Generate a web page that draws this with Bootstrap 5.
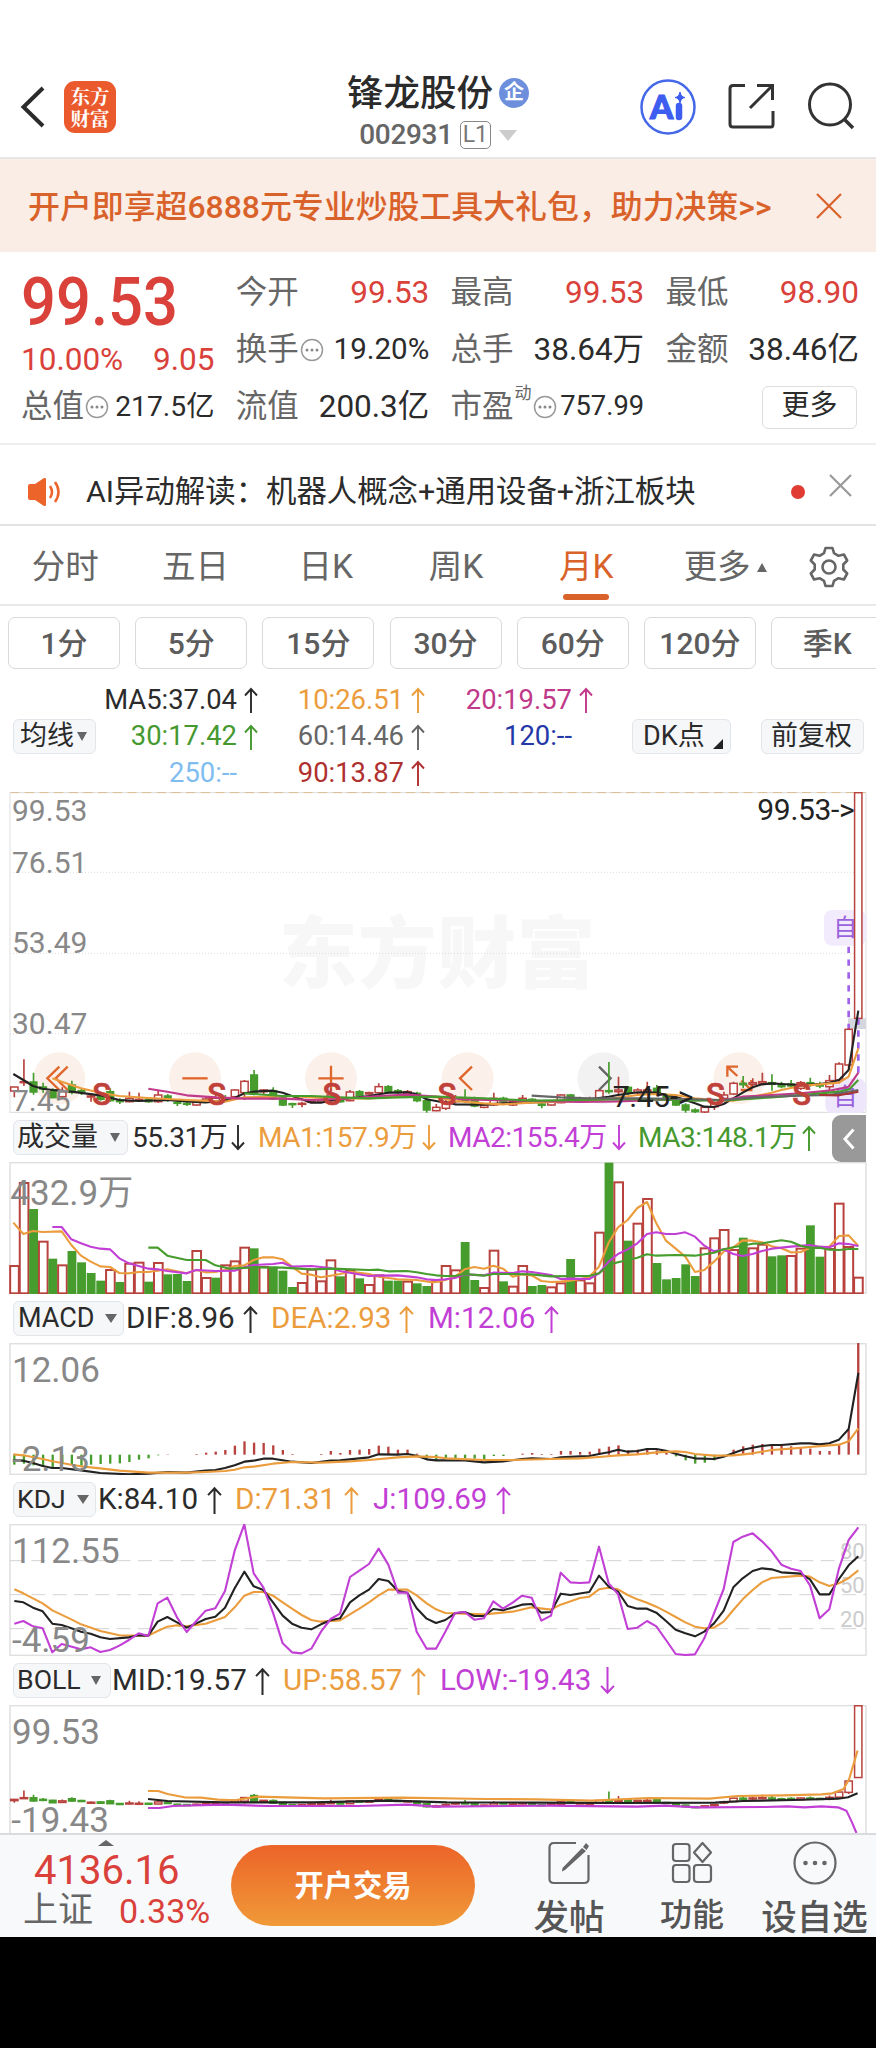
<!DOCTYPE html>
<html lang="zh-CN">
<head>
<meta charset="utf-8">
<meta name="viewport" content="width=device-width, initial-scale=1">
<title>锋龙股份 002931</title>
<link rel="stylesheet" href="https://cdn.jsdelivr.net/npm/bootstrap@5.3.0/dist/css/bootstrap.min.css">
<style>
:root{--up:#d9413a;--ink:#2b2b2b;--mut:#666;--org:#d9622b;--amber:#eb9d3e;--vio:#c23fd6;--grn:#46992f}
body{font-family:Roboto,"Noto Sans CJK SC",sans-serif;color:var(--ink);background:#fff;width:876px;overflow-x:hidden;line-height:1;white-space:nowrap}
svg{display:block;flex:none}
.c-up{color:var(--up)}.c-mut{color:var(--mut)}.c-org{color:var(--org)}.c-amber{color:var(--amber)}.c-vio{color:var(--vio)}.c-grn{color:var(--grn)}
.topbar{height:159px;padding:56px 20px 0 20px;display:grid;grid-template-columns:1fr auto 1fr;border-bottom:2px solid #e6e6e6}
.logo{width:52px;height:52px;border-radius:11px;background:#ea5a2d;color:#fff;font:700 19.5px/22px "Noto Serif CJK SC","Noto Sans CJK SC",sans-serif;text-align:center;padding-top:4px;white-space:normal}
.ttl{font-size:36.5px;font-weight:500;line-height:44px;padding-top:2px}
.qi{width:30px;height:30px;border-radius:50%;background:#6e90dc;color:#fff;font-size:20px;font-weight:700;line-height:28px;text-align:center}
.code{font-size:28px;font-weight:500;color:#666;letter-spacing:-.3px;line-height:30px}
.lv{width:31px;height:28px;border:1.5px solid #888;border-radius:5px;font-size:23px;line-height:25px;text-align:center;color:#777}
.tri-d{width:0;height:0;border:5px solid transparent;border-top:9px solid #666;border-bottom:0}
.tri-u{width:0;height:0;border:6px solid transparent;border-bottom:10px solid #666;border-top:0}
.promo{height:93px;background:#faede5;color:var(--org);font-size:31.9px;font-weight:500;padding:0 34px 0 28px}
.quote{height:193px;padding:12px 0 0 21px;display:grid;grid-template-columns:repeat(4,193.5px);column-gap:21.3px;grid-template-rows:57px 57px 58px;border-bottom:2px solid #eee;font-size:31.5px}
.quote>div{display:flex;justify-content:space-between;align-items:center}
.price{font-size:61.500px;font-weight:500;padding-top:20px;transform:scaleY(1.08)}
.dots{width:24px;height:24px}
.more{width:95px;height:43px;border:1.5px solid #ddd;border-radius:6px;font-size:28px;text-align:center;line-height:38px;margin:0 2px 0 auto}
.notice{height:81px;border-bottom:2px solid #e3e3e3;padding:15px 24px 0 27px;font-size:30.4px}
.reddot{width:14px;height:14px;border-radius:50%;background:#e03c32}
.tabs{height:80px;border-bottom:2px solid #e8e8e8;font-size:33.5px;color:var(--mut)}
.tabs>div{width:130.3px;height:78px;display:flex;align-items:center;justify-content:center;position:relative;padding-top:4px}
.tabs .on{color:var(--org)}
.tabs .on::after{content:"";position:absolute;bottom:4px;width:46px;height:6px;border-radius:3px;background:var(--org)}
.mins{padding:11px 0 0 8px;gap:15.2px;height:64px;width:876px;overflow:hidden}
.mins>div{flex:0 0 112px;height:52px;border:1.5px solid #d9d9d9;border-radius:7px;font-size:30px;font-weight:500;color:#5c5c5c;text-align:center;line-height:52px}
.malegend{height:122px;padding-top:12px}
.magrid{display:grid;grid-template-columns:162px 167px 168px;grid-template-rows:repeat(3,36.6px);font-size:27.4px}
.magrid>div{display:flex;justify-content:flex-end;align-items:center}
.magrid svg,.magrid i{width:14px;margin-left:7px}
.pill{height:35px;background:#f5f7f9;border:1.5px solid #e2e5ea;border-radius:6px;display:flex;align-items:center;font-size:27px;flex:none}
.ind{height:49px;padding-left:13px;display:flex;align-items:center;position:relative;font-size:29.6px}
.ind .it{display:flex;justify-content:space-between;align-items:center;flex:none}
.ind .vt{font-size:28px;letter-spacing:-.5px}
.fold{position:absolute;left:832px;top:2px;width:34px;height:47px;background:#999;border-radius:9px 0 0 9px;display:flex;align-items:center;justify-content:center}
.dock{height:104px;background:#f8f9fb;border-top:2px solid #d9dbde;display:grid;grid-template-columns:231px 244px 36px 116px 130px 115px;position:relative;color:#555}
.cta{height:81px;margin-top:10px;border-radius:41px;background:linear-gradient(#ec6429,#f09a38);color:#fff;font-size:29.3px;font-weight:700;text-align:center;line-height:82px}
.dk{display:flex;flex-direction:column;align-items:center;padding-top:6px;font-weight:500}
.dk span{line-height:44px;margin-top:11px;font-size:35.5px}
.foot{height:111px;background:#000}
</style>
</head>
<body>
<svg width="0" height="0" style="position:absolute"><defs>
<symbol id="up" viewBox="0 0 14 26"><path d="M7 26V2M1 8.500L7 2l6 6.500" fill="none" stroke="currentColor" stroke-width="1.900"/></symbol>
<symbol id="dn" viewBox="0 0 14 26"><path d="M7 0v24M1 17.500L7 24l6-6.500" fill="none" stroke="currentColor" stroke-width="1.900"/></symbol>
<symbol id="dots" viewBox="0 0 24 24"><circle cx="12" cy="12" r="10.500" fill="none" stroke="#999" stroke-width="1.500"/><g fill="#888"><circle cx="7" cy="12" r="1.500"/><circle cx="12" cy="12" r="1.500"/><circle cx="17" cy="12" r="1.500"/></g></symbol>
</defs></svg>

<header class="topbar">
  <div class="d-flex align-items-center">
    <svg width="26" height="42" viewBox="0 0 26 42"><path d="M23 2L3.500 21 23 40" fill="none" stroke="#2b2b2b" stroke-width="4"/></svg>
    <div class="logo" style="margin-left:18px">东方<br>财富</div>
  </div>
  <div class="d-flex flex-column align-items-center" style="padding-top:14px">
    <div class="d-flex align-items-center"><span class="ttl">锋龙股份</span><span class="qi" style="margin-left:6px">企</span></div>
    <div class="d-flex align-items-center mt-1"><span class="code">002931</span><span class="lv" style="margin:0 8px 0 7px">L1</span><span class="tri-d" style="border-width:11px 9px 0;border-top-color:#ccc"></span></div>
  </div>
  <div class="d-flex align-items-center justify-content-end">
    <svg width="56" height="56" viewBox="0 0 56 56"><circle cx="28" cy="28" r="26.500" fill="#fff" stroke="#4468e8" stroke-width="2.500"/><text x="10" y="39.500" font-family="Lato" font-weight="900" font-size="33" fill="#3d5cf0" stroke="#3d5cf0" stroke-width="1.200" textLength="21">A</text><path d="M39 27v11" stroke="#3d5cf0" stroke-width="6.500" stroke-linecap="round"/><path d="M40 13q1 5 5 5.500-4 .500-5 5.500-1-5-5-5.500 4-.500 5-5.500z" fill="#3d5cf0" stroke="#3d5cf0"/></svg>
    <svg style="margin-left:32px" width="47" height="47" viewBox="0 0 47 47"><path d="M17 2.500H5q-3 0-3 3V41q0 3 3 3h38q2 0 2-3V28M29 2.500h15.500V17M44 3L22 25" fill="none" stroke="#333" stroke-width="3"/></svg>
    <svg style="margin-left:32px" width="49" height="49" viewBox="0 0 49 49"><circle cx="23" cy="22.500" r="20.500" fill="none" stroke="#333" stroke-width="3"/><path d="M37 37l9 9" stroke="#333" stroke-width="3.500"/></svg>
  </div>
</header>

<div class="promo d-flex align-items-center justify-content-between"><span style="padding-top:4px">开户即享超6888元专业炒股工具大礼包，助力决策&gt;&gt;</span>
<svg width="26" height="26" viewBox="0 0 26 26"><path d="M1 1l24 24M25 1L1 25" stroke="#d9622b" stroke-width="2.200"/></svg></div>

<section class="quote">
  <div><span class="price c-up">99.53</span></div>
  <div><span class="c-mut">今开</span><span class="c-up">99.53</span></div>
  <div><span class="c-mut">最高</span><span class="c-up">99.53</span></div>
  <div><span class="c-mut">最低</span><span class="c-up">98.90</span></div>
  <div class="c-up" style="padding-top:20px"><span>10.00%</span><span>9.05</span></div>
  <div><span class="c-mut">换手</span><svg class="dots" style="margin:0 auto 0 1px"><use href="#dots"/></svg><span style="font-size:29.5px">19.20%</span></div>
  <div><span class="c-mut">总手</span><span>38.64万</span></div>
  <div><span class="c-mut">金额</span><span>38.46亿</span></div>
  <div><span class="c-mut">总值</span><svg class="dots" style="margin:0 auto 0 1px"><use href="#dots"/></svg><span style="font-size:28.3px">217.5亿</span></div>
  <div><span class="c-mut">流值</span><span>200.3亿</span></div>
  <div><span class="c-mut">市盈</span><sup class="c-mut" style="font-size:17px;top:-14px;margin-left:1px">动</sup><svg class="dots" style="margin:0 auto 0 1px"><use href="#dots"/></svg><span style="font-size:27.3px">757.99</span></div>
  <div><span class="more">更多</span></div>
</section>

<div class="notice d-flex align-items-center">
  <svg width="34" height="28" viewBox="0 0 34 28"><path d="M1 8q0-2 2-2h5l9-6q2-1 2 2v24q0 3-2 2l-9-6H3q-2 0-2-2z" fill="#ec6429"/><path d="M23 8q4 6 0 12M28 4q7 10 0 20" fill="none" stroke="#ec6429" stroke-width="2.500"/></svg>
  <span style="margin-left:25px">AI异动解读：机器人概念+通用设备+浙江板块</span>
  <span class="reddot ms-auto"></span>
  <svg style="margin:-14px 0 0 24px" width="23" height="23" viewBox="0 0 23 23"><path d="M1 1l21 21M22 1L1 22" stroke="#999" stroke-width="2.200"/></svg>
</div>

<nav class="tabs d-flex">
  <div>分时</div><div>五日</div><div>日K</div><div>周K</div><div class="on">月K</div>
  <div style="padding-left:17px">更多<span class="tri-u" style="margin-left:6px;border-width:0 5.500px 9px"></span></div>
  <div style="width:94px"><svg width="42" height="42" viewBox="0 0 42 42"><path d="M17.500 2h7l1.500 5.200 4.500 2.600 5.400-1.300 3.300 6-3.900 4v5l3.900 4-3.300 6-5.400-1.300-4.500 2.600L24.500 40h-7L16 34.800l-4.500-2.600-5.400 1.300-3.300-6 3.900-4v-5l-3.900-4 3.300-6 5.400 1.300L16 7.200z" fill="none" stroke="#666" stroke-width="2.600" stroke-linejoin="round"/><circle cx="21" cy="21" r="6.500" fill="none" stroke="#666" stroke-width="2.600"/></svg></div>
</nav>

<div class="mins d-flex"><div>1分</div><div>5分</div><div>15分</div><div>30分</div><div>60分</div><div>120分</div><div>季K</div></div>

<div class="malegend d-flex">
  <div class="pill" style="margin:37px 0 0 13px;width:83px;padding-left:6px">均线<span class="tri-d" style="margin-left:3px"></span></div>
  <div class="magrid">
    <div>MA5:37.04<svg height="26"><use href="#up"/></svg></div>
    <div class="c-amber">10:26.51<svg height="26"><use href="#up"/></svg></div>
    <div style="color:#c0398a">20:19.57<svg height="26"><use href="#up"/></svg></div>
    <div class="c-grn">30:17.42<svg height="26"><use href="#up"/></svg></div>
    <div class="c-mut">60:14.46<svg height="26"><use href="#up"/></svg></div>
    <div style="color:#2438a8">120:--<i></i></div>
    <div style="color:#7fbdf0">250:--<i></i></div>
    <div style="color:#b03030">90:13.87<svg height="26"><use href="#up"/></svg></div>
  </div>
  <div class="pill" style="margin:37px 0 0 39px;width:99px;padding-left:10px">DK点<svg style="margin:14px 0 0 8px" width="10" height="10"><path d="M10 0v10H0z" fill="#222"/></svg></div>
  <div class="pill" style="margin:37px 0 0 30px;width:103px;padding-left:9px">前复权</div>
</div>

<svg id="kline" width="876" height="321" viewBox="0 36 2628 963"></svg>

<div class="ind">
  <div class="pill" style="width:115px;padding-left:3px">成交量<span class="tri-d" style="margin-left:12px;border-width:9px 5.500px 0"></span></div>
  <div class="it vt" style="width:113px;margin-left:4px">55.31万<svg width="14" height="28"><use href="#dn"/></svg></div>
  <div class="it vt c-amber" style="width:178px;margin-left:13px">MA1:157.9万<svg width="14" height="28"><use href="#dn"/></svg></div>
  <div class="it vt c-vio" style="width:178px;margin-left:12px">MA2:155.4万<svg width="14" height="28"><use href="#dn"/></svg></div>
  <div class="it vt c-grn" style="width:178px;margin-left:12px">MA3:148.1万<svg width="14" height="28"><use href="#up"/></svg></div>
  <div class="fold"><svg width="12" height="22" viewBox="0 0 12 22"><path d="M10.500 1.500L2 11l8.500 9.500" fill="none" stroke="#fff" stroke-width="3"/></svg></div>
</div>
<svg id="vol" width="876" height="132" viewBox="0 156 2628 396"></svg>

<div class="ind">
  <div class="pill" style="width:111px;padding-left:4px;font-size:27px">MACD<span class="tri-d" style="margin-left:10px;border-width:9px 6px 0"></span></div>
  <div class="it" style="width:132px;margin-left:2px">DIF:8.96<svg width="15" height="28"><use href="#up"/></svg></div>
  <div class="it c-amber" style="width:143px;margin-left:13px">DEA:2.93<svg width="15" height="28"><use href="#up"/></svg></div>
  <div class="it c-vio" style="width:131px;margin-left:14px">M:12.06<svg width="15" height="28"><use href="#up"/></svg></div>
</div>
<svg id="macd" width="876" height="132" viewBox="0 40 2628 396"></svg>

<div class="ind">
  <div class="pill" style="width:83px;padding-left:3px;font-size:26.500px">KDJ<span class="tri-d" style="margin-left:11px;border-width:9px 6px 0"></span></div>
  <div class="it" style="width:124px;margin-left:2px">K:84.10<svg width="15" height="28"><use href="#up"/></svg></div>
  <div class="it c-amber" style="width:124px;margin-left:13px">D:71.31<svg width="15" height="28"><use href="#up"/></svg></div>
  <div class="it c-vio" style="width:138px;margin-left:14px">J:109.69<svg width="15" height="28"><use href="#up"/></svg></div>
</div>
<svg id="kdj" width="876" height="132" viewBox="0 582 2628 396"></svg>

<div class="ind">
  <div class="pill" style="width:98px;padding-left:3px;font-size:26.700px">BOLL<span class="tri-d" style="margin-left:10px;border-width:9px 5.500px 0"></span></div>
  <div class="it" style="width:158px;margin-left:1px">MID:19.57<svg width="15" height="28"><use href="#up"/></svg></div>
  <div class="it c-amber" style="width:143px;margin-left:13px">UP:58.57<svg width="15" height="28"><use href="#up"/></svg></div>
  <div class="it c-vio" style="width:175px;margin-left:14px">LOW:-19.43<svg width="15" height="28"><use href="#dn"/></svg></div>
</div>
<svg id="boll" width="876" height="128" viewBox="0 163 2628 384"></svg>

<footer class="dock">
  <div class="c-up" style="padding-top:5px">
    <div class="tri-u" style="margin-left:98px;border-width:0 8px 6px"></div>
    <div style="font-size:40px;line-height:42px;padding-left:34px;margin-top:4px">4136.16</div>
    <div class="d-flex align-items-center" style="font-size:34px;line-height:34px;padding:2px 0 0 23px"><span class="c-mut" style="font-size:35px">上证</span><span style="margin-left:26px">0.33%</span></div>
  </div>
  <div class="cta">开户交易</div>
  <div></div>
  <div class="dk"><svg width="42" height="44" viewBox="0 0 42 44"><path d="M28 2H6Q1.500 2 1.500 6.500V38Q1.500 42 6 42h30q4.500 0 4.500-4V14" fill="none" stroke="#666" stroke-width="2.200"/><path d="M38 2l3 3-2.500 4-3.500-3zM34 7l4 3-21 19-3 1.500.500-3.500z" fill="#666"/></svg><span>发帖</span></div>
  <div class="dk"><svg width="42" height="44" viewBox="0 0 42 44"><g fill="none" stroke="#666" stroke-width="2.200"><rect x="2" y="3" width="16.500" height="17" rx="3"/><rect x="2" y="24" width="16.500" height="17" rx="3"/><rect x="23" y="24" width="17" height="17" rx="3"/><path d="M31.500 2l8.500 9.500-8.500 9.500-8.500-9.500z" stroke-linejoin="round"/></g></svg><span style="font-size:32px;margin-top:8px">功能</span></div>
  <div class="dk"><svg width="44" height="44" viewBox="0 0 44 44"><circle cx="22" cy="22" r="20.500" fill="none" stroke="#666" stroke-width="2.200"/><g fill="#666"><circle cx="12.500" cy="22" r="2.300"/><circle cx="22" cy="22" r="2.300"/><circle cx="31.500" cy="22" r="2.300"/></g></svg><span>设自选</span></div>
</footer>
<div class="foot"></div>

<script>
// All chart drawings use units of one third of a pixel.
const RED='#b8423d', GRN='#469c2d', BLK='#222', ORG='#eb9c3c', VIO='#c23fd6', GRY='#888';
const H=1308, X=i=>43+28.77*i;
const $=id=>document.getElementById(id);
// "x,y ..." from the left half plus points from the right half, shifted by H
function pts(l,r,k=1){const p=(s,o)=>s.trim()?s.trim().split(/\s+/).map(v=>{const a=v.split(',');return (+a[0]*k+o)+','+a[1]}):[];return p(l,0).concat(p(r||'',H)).join(' ')}
const line=(c,l,r,k)=>`<polyline points="${pts(l,r,k)}" fill="none" stroke="${c}" stroke-width="6.3" stroke-linejoin="round"/>`;
const hl=(y,d,c='#ddd',w=3)=>`<path d="M30 ${y}H2598" stroke="${c}" stroke-width="${w}" ${d?`stroke-dasharray="${d}"`:''}/>`;
const txt=(x,y,s,t,c=GRY,e='')=>`<text x="${x}" y="${y}" font-size="${s*3}" fill="${c}" ${e}>${t}</text>`;
const frame=(t,b)=>`<rect x="30" y="${t+2}" width="2568" height="${b-t-4}" fill="none" stroke="#e0e0e0" stroke-width="4.500"/>`;

// colour, high, body top, body bottom, low
const K=`r 920 921 933 952|r 838 905 908 918|g 878 906 936 944|g 908 921 927 938|g 925 930 953 955|r 922 935 950 955|g 902 915 937 943|g 925 932 935 945|r 940 948 950 965|g 940 945 958 962|g 925 935 962 965|g 955 960 965 972|r 935 955 965 967|r 938 958 962 965|g 955 958 965 968|r 930 945 965 968|g 942 948 960 965|g 962 967 969 978|g 965 970 972 978|r 960 967 975 977|r 952 957 965 967|r 940 955 965 970|g 945 955 960 965|r 928 930 950 955|r 900 904 938 960|g 870 885 942 946|r 928 930 935 945|g 922 932 957 960|g 945 950 975 978|g 968 971 974 984|r 965 970 973 982|r 960 964 967 970|r 950 960 966 968|r 925 945 962 965|g 950 955 965 968|r 930 936 962 964|g 930 935 947 950|r 935 938 942 946|r 910 920 938 940|g 915 920 938 940|g 927 932 938 945|r 930 935 942 945|g 935 940 962 967|g 955 962 990 998|r 972 982 992 994|r 960 970 985 990|r 945 955 965 970|g 928 955 962 968|g 950 958 978 982|r 970 975 982 985|r 938 955 975 978|g 950 955 965 968|r 960 965 975 978|r 945 955 963 970|g 955 958 962 966|g 965 972 976 985|r 960 965 975 977|r 943 945 968 970|g 942 945 955 960|r 950 955 962 965|r 950 957 963 966|r 928 932 955 958|g 846 932 935 941|r 890 930 935 945|g 918 922 940 945|r 925 930 938 942|r 905 930 935 938|g 915 925 940 945|g 945 950 955 960|g 950 958 975 978|g 970 975 990 998|g 985 990 995 1002|r 978 982 996 1000|r 965 970 980 990|r 935 945 955 965|r 905 910 942 945|g 888 910 914 924|r 895 908 913 925|r 878 905 910 915|g 883 908 913 932|g 905 915 920 925|g 900 912 918 925|r 903 908 925 930|g 893 908 912 920|g 905 912 918 925|r 885 902 920 930|r 847 852 900 910|r 745 748 855 870|r 38 38 715 715`.split('|').map(s=>s.split(' '));
function candles(f){return K.map(([c,...v],i)=>{const [h,t,b,l]=v.map(n=>f(+n)),x=X(i),col=c=='r'?RED:GRN;
  return `<path d="M${x} ${h}V${t}M${x} ${b}V${l}" stroke="${col}" stroke-width="5"/><rect x="${x-(c=='r'?11:10)}" y="${t}" width="${c=='r'?22:20}" height="${Math.max(b-t,3)}" fill="${c=='r'?'#fff':col}" stroke="${col}" stroke-width="4.5"/>`}).join('')}

const disc=(x,c,p,s)=>`<circle cx="${x}" cy="895" r="78" fill="${c}"/><path d="${p}" fill="none" stroke="${s}" stroke-width="7"/>`;
const PK='#fbf1ea', OR='#e0662c';
$('kline').innerHTML=
 `<text x="836" y="606" font-size="236" font-weight="900" fill="#f7f7f7" textLength="950">东方财富</text>`+
 hl(37,'','#e2e2e2',6)+hl(37,'28 16','#dcb98a',3)+hl(277,'3 6')+hl(520,'3 6')+hl(761,'3 6')+hl(997,'','#e0e0e0',4)+
 `<path d="M30 37V1000M2598 37V1000" stroke="#e8e8e8" stroke-width="4"/>`+
 disc(178,PK,'M178 860L142 895L178 930M203 860L167 895L203 930',OR)+disc(585,PK,'M547 895H623',OR)+disc(993,PK,'M955 895H1031M993 857V933',OR)+
 disc(1403,PK,'M1416 860L1380 895L1416 930',OR)+disc(1810,'#f2f2f2','M1797 860L1832 895L1797 930','#666')+disc(2218,PK,'M2182 890V860H2214M2184 862L2212 888M2222 930H2254V900M2252 928L2224 902',OR)+
 `<rect x="2472" y="390" width="126" height="107" rx="24" fill="#f2ebfd"/><rect x="2476" y="895" width="122" height="106" rx="24" fill="#eee6fb"/><rect x="2544" y="715" width="54" height="32" fill="#d5d7de"/>`+
 `<path d="M2546 500V748" stroke="#a062e8" stroke-width="8" stroke-dasharray="19 19.500"/>`+
 txt(2500,469,24,'自','#9a62dd')+txt(2500,974,24,'自','#9a62dd')+
 candles(y=>y)+
 `<path d="M2575 715V895" stroke="#a062e8" stroke-width="8" stroke-dasharray="19 17"/>`+
 line(BLK,'40,882 70,900 99,918 128,926 157,930 214,935 301,946 358,960 416,963 502,960 560,964 617,967 690,960 733,940 761,935 819,932 848,938 876,948 905,958 934,968 963,968 1000,960 1049,955 1107,948 1165,938 1222,937 1250,943 1280,958 1320,965','28,966 57,973 144,974 201,970 258,968 345,965 403,960 460,958 518,950 546,945 604,937 661,938 719,950 777,970 805,980 834,981 863,972 892,955 920,938 950,922 978,913 1007,910 1036,912 1094,915 1151,912 1180,908 1209,900 1238,870 1267,692')+
 line(ORG,'157,895 185,905 243,925 301,938 358,948 445,954 560,960 675,965 733,952 819,950 876,948 934,952 1020,955 1107,955 1193,950 1250,948 1308,952','57,963 144,970 201,973 287,968 403,964 489,960 546,953 604,945 661,942 719,945 777,955 834,960 892,962 950,950 1007,938 1036,930 1094,918 1151,913 1209,908 1238,890 1267,805')+
 line('#c0398a','445,926 502,935 560,946 646,952 733,956 848,956 934,960 1020,957 1136,948 1222,944 1308,950','86,958 258,962 432,966 546,964 661,960 777,960 863,960 920,950 1007,945 1094,940 1180,932 1238,920 1267,878')+
 line(GRN,'733,940 848,948 934,948 1020,952 1107,955 1193,952 1308,950','144,955 287,962 432,960 604,957 777,962 892,960 1007,952 1122,943 1209,935 1240,928 1267,900')+
 line('#666','','287,947 374,952 460,955 604,955 748,957 863,960 950,952 1065,948 1180,945 1267,930')+
 line('#a83232','','1150,945 1209,946 1267,935')+
 [305,650,996,1341,2146,2405].map(x=>txt(x,974,31,'S','#c0413a','text-anchor="middle" font-weight="500" stroke="#c0413a" stroke-width="2"')).join('')+
 txt(36,124,30,'99.53')+txt(36,278,30,'76.51')+txt(36,520,30,'53.49')+txt(36,761,30,'30.47')+txt(36,993,30,'7.45')+
 txt(2272,120,30,'99.53-&gt;',BLK,'textLength="292"')+txt(1838,982,30,'7.45-&gt;',BLK,'textLength="242"');

const V='r467 r218 g297 r394 g446 r465 g423 g457 g489 g512 r479 g516 r460 r457 g515 r458 g493 g492 g513 r422 r503 g503 r465 r453 r412 g415 r470 g470 g482 g531 r518 r478 r513 r450 g499 r482 g505 r524 r495 g512 g512 r514 g520 g528 r513 r467 r480 g396 g510 r533 r421 g514 r529 r467 g528 g525 r531 r519 g447 r510 r519 r367 g158 r216 g392 r340 r266 g459 g508 g504 g463 g498 r414 r384 r359 r419 g383 r414 r403 g439 g436 r437 r415 g346 g440 r416 r280 r410 r502'.split(' ');
$('vol').innerHTML=frame(156,552)+
 V.map((s,i)=>{const t=+s.slice(1),x=X(i);return s[0]=='r'?`<rect x="${x-12.5}" y="${t+1}" width="26" height="${549-t}" fill="#fff" stroke="${RED}" stroke-width="6"/>`:`<rect x="${x-13}" y="${t}" width="26.5" height="${552-t}" fill="${GRN}"/>`}).join('')+
 line(ORG,'40,338 70,372 99,363 128,366 185,364 214,405 243,437 272,455 301,469 330,471 358,489 387,490 416,486 445,486 473,482 502,478 560,490 589,480 617,487 646,486 675,480 704,468 733,466 761,450 790,442 819,442 848,448 876,470 905,491 934,494 963,502 992,497 1020,492 1049,485 1107,492 1136,500 1193,508 1250,510 1296,517','0,516 28,510 57,500 86,478 115,471 144,476 172,467 201,476 230,500 258,493 287,496 316,513 345,516 374,515 403,512 432,508 460,500 489,470 518,398 546,352 575,330 604,294 633,276 661,340 690,392 748,440 777,486 805,480 834,455 863,425 892,412 920,391 950,392 978,397 1007,409 1036,415 1065,427 1094,426 1122,414 1151,413 1180,410 1209,378 1238,376 1267,408')+
 line(VIO,'157,351 185,351 214,388 243,400 272,410 301,416 330,418 358,445 387,460 416,468 445,476 473,478 502,483 560,490 589,480 646,483 704,482 733,472 761,465 819,462 848,458 876,470 934,468 992,474 1020,483 1049,488 1107,498 1136,497 1193,496 1250,502 1280,508 1308,510','28,508 57,504 86,493 144,496 172,488 230,489 258,484 287,486 345,495 374,507 403,506 460,507 489,490 518,455 546,432 575,418 604,400 633,372 661,367 690,372 719,372 748,367 777,380 805,407 834,424 863,418 892,432 920,438 950,432 978,423 1007,416 1065,410 1122,405 1151,410 1180,412 1209,400 1238,402 1267,408')+
 line(GRN,'445,413 473,413 502,437 560,450 617,450 646,466 690,476 761,472 848,473 934,478 1000,476 1107,480 1136,479 1165,484 1220,483 1250,487 1280,492 1308,496','28,498 57,498 86,492 144,497 172,492 230,492 287,493 345,499 403,498 460,498 489,490 518,465 546,457 575,450 604,443 633,433 661,437 719,435 777,437 805,433 834,428 863,418 892,412 950,401 978,400 1036,391 1065,395 1094,407 1122,414 1151,413 1180,419 1209,420 1238,417 1267,417')+
 txt(31,286,35,'432.9万');

// MACD columns: end of each column, measured from the zero line at 375
const M=[405,402,407,410,417,400,405,408,405,403,402,401,397,390,386,377,374,0,0,373,369,366,361,348,335,339,340,347,361,373,0,0,373,364,370,361,360,358,348,351,360,360,372,388,391,388,385,385,387,388,379,379,0,372,370,373,373,364,364,367,366,357,351,347,362,360,355,362,368,380,392,402,399,392,380,360,350,345,343,348,346,350,352,357,364,364,345,300,40];
$('macd').innerHTML=frame(40,436)+
 M.map((v,i)=>v?`<path d="M${X(i)} 375V${v}" stroke="${v>375?GRN:RED}" stroke-width="7"/>`:'').join('')+
 line(BLK,'40,392 70,393 99,400 128,409 157,415 185,415 243,422 301,430 387,434 445,432 503,427 560,429 617,423 646,421 675,415 704,407 733,396 761,393 790,387 819,387 876,396 934,400 992,393 1020,392 1078,386 1107,383 1136,374 1193,375 1222,373 1250,378 1280,389 1308,392','28,392 86,392 144,398 201,395 258,388 287,386 345,388 374,383 432,380 460,379 489,373 518,368 546,360 575,366 604,364 633,358 661,358 690,363 719,372 748,380 777,386 834,388 863,381 892,370 920,360 950,354 978,349 1007,346 1036,346 1094,341 1122,341 1151,344 1180,341 1209,330 1238,298 1267,130')+
 line(ORG,'40,374 70,377 128,388 157,395 214,405 243,410 301,416 358,423 445,429 560,429 617,427 675,424 704,420 733,413 761,411 819,402 876,397 963,399 1049,395 1107,391 1193,383 1250,380 1308,382','28,386 144,391 230,391 345,388 432,386 489,382 546,377 604,374 661,368 719,365 748,367 777,373 834,378 892,377 950,371 1007,361 1065,357 1122,352 1180,347 1209,345 1238,335 1267,296')+
 txt(36,156,35,'12.06')+txt(36,425,35,'-2.13');

$('kdj').innerHTML=frame(582,978)+hl(692,'42 22','#d4d4d4')+hl(794,'42 22','#d4d4d4')+hl(896,'42 22','#d4d4d4')+
 txt(2520,688,22,'80','#ccc')+txt(2520,790,22,'50','#ccc')+txt(2520,892,22,'20','#ccc')+
 line(ORG,'43,778 70,790 128,820 157,841 214,868 243,883 301,903 358,916 445,917 473,903 502,890 531,886 560,889 617,881 675,861 704,832 733,797 761,786 790,786 819,797 848,817 876,836 905,855 934,870 963,875 1020,871 1078,836 1107,817 1136,796 1165,779 1222,779 1250,796 1280,820 1308,838','28,849 144,853 230,845 287,832 345,839 374,824 432,804 460,800 489,778 518,773 546,778 575,795 604,808 633,818 661,830 690,845 719,861 748,877 777,890 805,895 834,893 863,875 892,840 920,808 950,780 978,757 1007,744 1094,737 1122,740 1151,757 1180,768 1209,760 1238,744 1267,721')+
 line(BLK,'43,813 70,817 99,833 128,844 157,881 185,885 214,895 243,905 272,911 301,922 330,927 387,922 416,916 445,917 473,875 502,861 531,877 560,893 589,880 617,867 646,860 675,833 704,775 733,725 761,769 790,780 819,817 848,857 876,881 905,893 934,898 963,883 992,871 1020,865 1050,817 1078,796 1107,779 1136,747 1165,753 1194,783 1222,788 1250,835 1280,866 1308,879','28,870 57,850 86,846 115,858 144,858 172,837 201,841 258,824 287,822 316,848 345,846 374,791 403,795 460,786 489,737 518,770 546,785 575,828 604,836 633,836 661,848 690,873 719,899 748,910 777,919 805,905 834,880 863,842 892,772 920,745 950,723 978,715 1007,718 1036,727 1094,731 1122,748 1151,793 1180,793 1209,747 1238,706 1267,679')+
 line(VIO,'43,881 70,873 99,889 128,895 157,967 185,942 243,958 272,952 301,966 330,960 358,947 387,930 416,910 445,918 473,820 502,803 531,862 560,906 589,873 617,842 646,835 675,783 704,662 733,583 761,730 790,772 819,848 848,940 876,967 905,970 934,956 963,905 992,867 1020,851 1050,741 1078,722 1107,702 1136,656 1165,704 1194,788 1222,788 1250,905 1280,956 1308,956','28,905 57,849 86,846 115,869 144,865 172,814 201,836 230,818 258,797 287,803 316,872 345,857 374,728 403,757 432,759 460,757 489,650 518,760 546,792 575,897 604,893 633,873 661,889 690,930 719,972 748,975 777,973 805,925 834,850 863,777 892,636 920,620 950,610 978,634 1007,664 1036,704 1065,716 1094,723 1122,766 1151,865 1180,838 1209,715 1238,630 1267,592')+
 txt(36,698,35,'112.55')+txt(36,967,35,'-4.59');

const W=2628/1568;
$('boll').innerHTML=frame(163,700)+candles(y=>165+(y-37)*.318)+
 line(ORG,'265,421 283,421 300,430 330,440 360,441 390,447 420,449 460,438 580,443 720,441 870,445 960,446 1060,450 1160,442 1270,444 1320,436 1400,434 1470,431 1490,428 1510,415 1520,385 1535,300','',W)+
 line(BLK,'265,445 300,451 400,455 560,455 700,450 800,455 960,456 1100,457 1280,456 1330,451 1420,448 1500,444 1518,440 1535,428','',W)+
 line(VIO,'265,472 285,472 310,466 400,462 480,466 640,466 730,462 780,468 980,465 1140,468 1190,465 1250,470 1370,469 1410,467 1440,470 1470,467 1500,470 1515,480 1525,515 1533,547','',W)+
 txt(36,280,35,'99.53')+txt(34,545,35,'-19.43');
</script>
<script src="https://cdn.jsdelivr.net/npm/bootstrap@5.3.0/dist/js/bootstrap.bundle.min.js"></script>
</body>
</html>
